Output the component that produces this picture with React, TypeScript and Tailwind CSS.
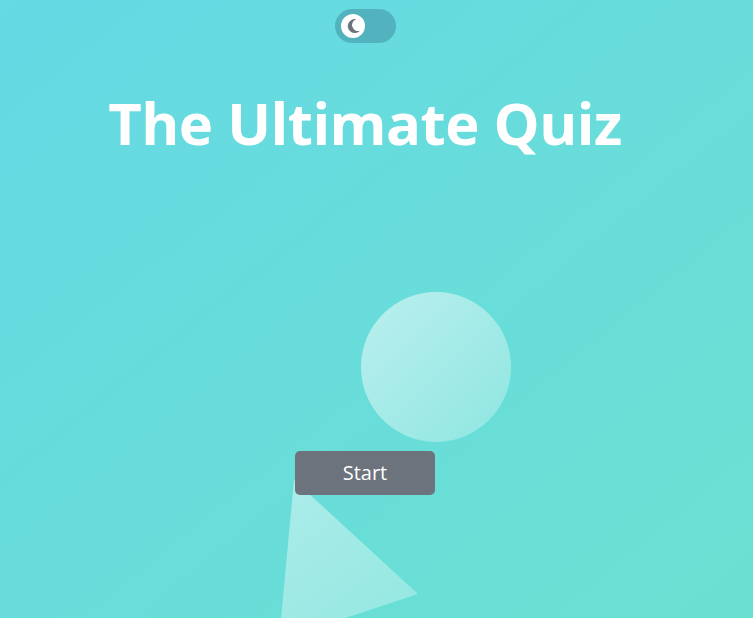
import React from 'react';

const Moon = () => (
   <svg width="20" height="20" viewBox="0 0 16 16">
      <path
         d="M10.6 2.6A5.6 5.6 0 1 0 13.6 11.8 4.6 4.6 0 0 1 10.6 2.6Z"
         fill="#6d737d"
      />
   </svg>
);

const App = () => {
   return (
      <div
         className="relative h-[618px] w-[753px] overflow-hidden bg-gradient-to-br from-[#65d9e4] to-[#6be0d1]"
         style={{ fontFamily: '"Open Sans", "Noto Sans", sans-serif' }}
      >
         {/* decorative shapes */}
         <div className="absolute left-[361px] top-[292px] h-[150px] w-[150px] rounded-full bg-gradient-to-br from-white/55 to-white/25" />
         <svg className="absolute left-0 top-0" width="753" height="618">
            <defs>
               <linearGradient id="tri" x1="0" y1="0" x2="0.6" y2="1">
                  <stop offset="0" stopColor="#ffffff" stopOpacity="0.45" />
                  <stop offset="1" stopColor="#ffffff" stopOpacity="0.3" />
               </linearGradient>
            </defs>
            <polygon points="294,480 418,594 279,640" fill="url(#tri)" />
         </svg>

         <div className="relative flex w-[730px] flex-col items-center">
            <button className="mt-[9px] flex h-[34px] w-[61px] items-center rounded-full bg-[#52b3be] px-[6px]">
               <span className="flex h-[24px] w-[24px] items-center justify-center rounded-full bg-white">
                  <Moon />
               </span>
            </button>

            <h1 className="mt-[40px] text-[58px] font-bold leading-[80px] tracking-[-0.5px] text-white">
               The Ultimate Quiz
            </h1>

            <button className="mt-[288px] h-[44px] w-[140px] rounded-[5px] bg-[#6d737d] text-[20px] text-white">
               Start
            </button>
         </div>
      </div>
   );
};

export default App;
